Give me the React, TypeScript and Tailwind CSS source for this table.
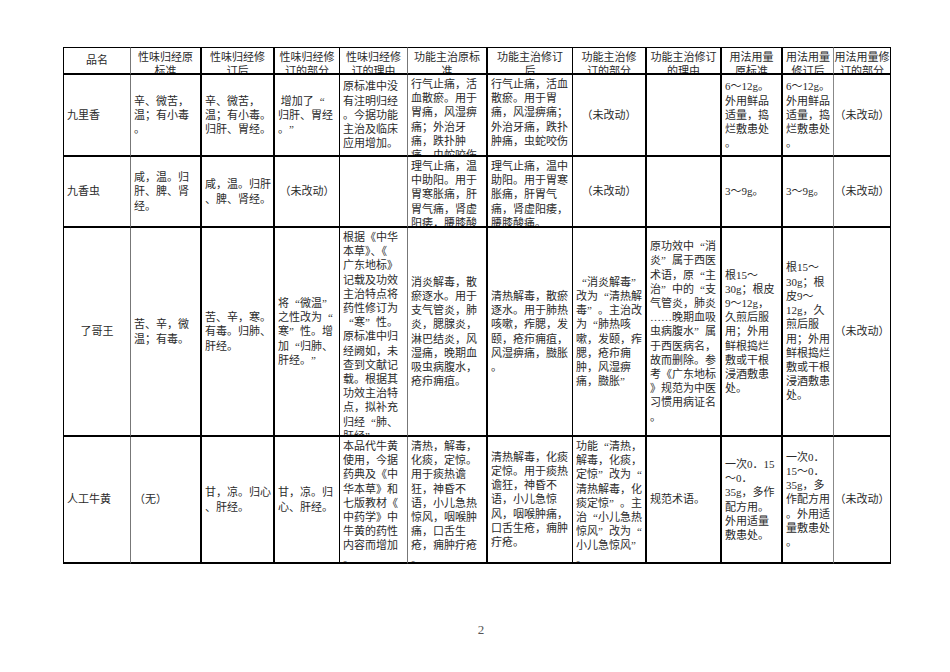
import React from "react";

const RB = [
  "border-r border-r-[#777]",
  "border-r-2 border-r-black",
  "border-r-2 border-r-black",
  "border-r border-r-black",
  "border-r border-r-[#777]",
  "border-r-2 border-r-black",
  "border-r border-r-black",
  "border-r-2 border-r-black",
  "border-r-2 border-r-black",
  "border-r-2 border-r-black",
  "border-r border-r-[#888]",
  "border-r border-r-black",
];

type C = { t: string; c?: boolean };

const header: string[] = [
  "品名",
  "性味归经原\n标准",
  "性味归经修\n订后",
  "性味归经修\n订的部分",
  "性味归经修\n订的理由",
  "功能主治原标\n准",
  "功能主治修订\n后",
  "功能主治修\n订的部分",
  "功能主治修订\n的理由",
  "用法用量\n原标准",
  "用法用量\n修订后",
  "用法用量修\n订的部分",
];

const rows: C[][] = [
  [
    { t: "九里香" },
    { t: "辛、微苦，\n温；有小毒\n。" },
    { t: "辛、微苦，\n温；有小毒。\n归肝、胃经。" },
    { t: " 增加了“\n归肝、胃经\n。”" },
    { t: "原标准中没\n有注明归经\n。今据功能\n主治及临床\n应用增加。" },
    { t: "行气止痛，活\n血散瘀。用于\n胃痛，风湿痹\n痛；外治牙\n痛，跌扑肿\n痛，虫蛇咬伤\n。" },
    { t: "行气止痛，活血\n散瘀。用于胃\n痛，风湿痹痛；\n外治牙痛，跌扑\n肿痛，虫蛇咬伤\n。" },
    { t: "（未改动）", c: true },
    { t: "" },
    { t: "6～12g。\n外用鲜品\n适量，捣\n烂敷患处\n。" },
    { t: "6～12g。\n外用鲜品\n适量，捣\n烂敷患处\n。" },
    { t: "（未改动）", c: true },
  ],
  [
    { t: "九香虫" },
    { t: "咸，温。归\n肝、脾、肾\n经。" },
    { t: "咸，温。归肝\n、脾、肾经。" },
    { t: "（未改动）", c: true },
    { t: "" },
    { t: "理气止痛，温\n中助阳。用于\n胃寒胀痛，肝\n胃气痛，肾虚\n阳痿，腰膝酸\n痛。" },
    { t: "理气止痛，温中\n助阳。用于胃寒\n胀痛，肝胃气\n痛，肾虚阳痿，\n腰膝酸痛。" },
    { t: "（未改动）", c: true },
    { t: "" },
    { t: "3～9g。" },
    { t: "3～9g。" },
    { t: "（未改动）", c: true },
  ],
  [
    { t: "了哥王", c: true },
    { t: "苦、辛，微\n温；有毒。" },
    { t: "苦、辛，寒。\n有毒。归肺、\n肝经。" },
    { t: "将“微温”\n之性改为“\n寒”性。增\n加“归肺、\n肝经。”" },
    { t: "根据《中华\n本草》、《\n广东地标》\n记载及功效\n主治特点将\n药性修订为\n“寒”性。\n原标准中归\n经阙如，未\n查到文献记\n载。根据其\n功效主治特\n点，拟补充\n归经“肺、\n肝经”。" },
    { t: "消炎解毒，散\n瘀逐水。用于\n支气管炎，肺\n炎，腮腺炎，\n淋巴结炎，风\n湿痛，晚期血\n吸虫病腹水，\n疮疖痈疽。" },
    { t: "清热解毒，散瘀\n逐水。用于肺热\n咳嗽，痄腮，发\n颐，疮疖痈疽，\n风湿痹痛，臌胀\n。" },
    { t: "“消炎解毒”\n改为“清热解\n毒”。主治改\n为“肺热咳\n嗽，发颐，痄\n腮，疮疖痈\n肿，风湿痹\n痛，臌胀”" },
    { t: "原功效中“消\n炎”属于西医\n术语，原“主\n治”中的“支\n气管炎，肺炎\n……晚期血吸\n虫病腹水”属\n于西医病名，\n故而删除。参\n考《广东地标\n》规范为中医\n习惯用病证名\n。" },
    { t: "根15～\n30g；根皮\n9～12g，\n久煎后服\n用；外用\n鲜根捣烂\n敷或干根\n浸酒敷患\n处。" },
    { t: "根15～\n30g；根\n皮9～\n12g，久\n煎后服\n用；外用\n鲜根捣烂\n敷或干根\n浸酒敷患\n处。" },
    { t: "（未改动）", c: true },
  ],
  [
    { t: "人工牛黄" },
    { t: "（无）" },
    { t: "甘，凉。归心\n、肝经。" },
    { t: "甘，凉。归\n心、肝经。" },
    { t: "本品代牛黄\n使用，今据\n药典及《中\n华本草》和\n七版教材《\n中药学》中\n牛黄的药性\n内容而增加\n。" },
    { t: "清热，解毒，\n化痰，定惊。\n用于痰热谵\n狂，神昏不\n语，小儿急热\n惊风，咽喉肿\n痛，口舌生\n疮，痈肿疔疮\n。" },
    { t: "清热解毒，化痰\n定惊。用于痰热\n谵狂，神昏不\n语，小儿急惊\n风，咽喉肿痛，\n口舌生疮，痈肿\n疔疮。" },
    { t: "功能“清热，\n解毒，化痰，\n定惊”改为“\n清热解毒，化\n痰定惊”。主\n治“小儿急热\n惊风”改为“\n小儿急惊风”\n。" },
    { t: "规范术语。" },
    { t: "一次0．15\n～0．\n35g，多作\n配方用。\n外用适量\n敷患处。" },
    { t: "一次0．\n15～0．\n35g，多\n作配方用\n。外用适\n量敷患处\n。" },
    { t: "（未改动）", c: true },
  ],
];

function Txt({ t }: { t: string }) {
  const parts = t.split(/([“”])/);
  return (
    <>
      {parts.map((p, i) =>
        p === "“" ? (
          <span key={i} className="inline-block w-[1em] text-right font-['Liberation_Serif']">
            {p}
          </span>
        ) : p === "”" ? (
          <span key={i} className="inline-block w-[1em] text-left font-['Liberation_Serif']">
            {p}
          </span>
        ) : (
          <React.Fragment key={i}>{p}</React.Fragment>
        )
      )}
    </>
  );
}

export default function App() {
  return (
    <div className="w-[950px] h-[672px] bg-white overflow-hidden pt-[47px] pl-[63px] font-['Liberation_Serif','Noto_Sans_CJK_SC',serif] text-[#2a2a2a]">
      <div className="grid w-[828px] grid-cols-[68px_71px_73px_65px_68px_80px_85px_74px_75px_61px_51px_57px] grid-rows-[28px_82px_71px_209px_127px] text-[11px] leading-[14.2px]">
        {header.map((h, i) => (
          <div
            key={"h" + i}
            className={`overflow-hidden flex flex-col items-center [justify-content:safe_center] px-[2px] py-[2px] border-t border-t-black border-b-2 border-b-black ${RB[i]} ${i === 0 ? "border-l border-l-black" : ""}`}
          >
            <div className="whitespace-pre text-center">
              <Txt t={h} />
            </div>
          </div>
        ))}
        {rows.map((r, ri) =>
          r.map((cell, ci) => (
            <div
              key={ri + "-" + ci}
              className={`overflow-hidden flex flex-col [justify-content:safe_center] px-[3px] py-[2px] border-b-2 border-b-black ${RB[ci]} ${ci === 0 ? "border-l border-l-black" : ""} ${cell.c ? "items-center" : "items-start"}`}
            >
              <div className={`whitespace-pre ${cell.c ? "text-center" : "text-left"}`}>
                <Txt t={cell.t} />
              </div>
            </div>
          ))
        )}
      </div>
      <div className="mt-[58px] w-[828px] pl-[8px] text-center text-[13px] leading-[16px] text-[#555]">2</div>
    </div>
  );
}
